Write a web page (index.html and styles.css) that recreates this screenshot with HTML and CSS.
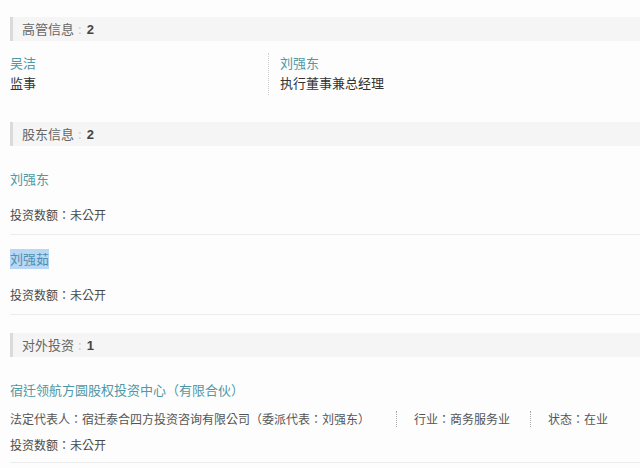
FILE: index.html
```html
<!DOCTYPE html>
<html lang="zh-CN">
<head>
    <meta charset="UTF-8">
    <meta name="viewport" content="width=device-width, initial-scale=1.0">
    <title>企业信息</title>
    <link rel="stylesheet" href="styles.css">
</head>
<body>
    <div class="page">
        <div class="section-title">高管信息<span class="sep">:</span><span class="count">2</span></div>
        <div class="exec-list">
            <div class="exec">
                <a class="link" href="#">吴洁</a>
                <div class="role">监事</div>
            </div>
            <div class="exec">
                <a class="link" href="#">刘强东</a>
                <div class="role">执行董事兼总经理</div>
            </div>
        </div>

        <div class="section-title second">股东信息<span class="sep">:</span><span class="count">2</span></div>
        <div class="holder-list">
            <div class="holder">
                <a class="link" href="#">刘强东</a>
                <div class="detail">投资数额：未公开</div>
            </div>
            <div class="holder">
                <a class="link selected" href="#">刘强茹</a>
                <div class="detail">投资数额：未公开</div>
            </div>
        </div>

        <div class="section-title third">对外投资<span class="sep">:</span><span class="count">1</span></div>
        <div class="invest">
            <a class="link company" href="#">宿迁领航方圆股权投资中心（有限合伙）</a>
            <div class="meta">
                <span>法定代表人：宿迁泰合四方投资咨询有限公司（委派代表：刘强东）</span>
                <span class="meta-item">行业：商务服务业</span>
                <span class="meta-item">状态：在业</span>
            </div>
            <div class="detail">投资数额：未公开</div>
        </div>
    </div>
</body>
</html>
```

FILE: styles.css
```css
body {
    margin: 0;
    background: #fdfdfd;
    font-family: "Noto Sans CJK TC", "Liberation Sans", sans-serif;
    font-feature-settings: "locl" 0;
    color: #333;
}
.page {
    padding: 17px 0 0 10px;
}
.section-title {
    height: 24px;
    line-height: 24px;
    background: #f5f5f5;
    border-left: 3px solid #dadada;
    padding-left: 9px;
    font-size: 13px;
    color: #666;
}
.section-title.second {
    margin-top: 27px;
}
.section-title.third {
    margin-top: 18px;
}
.sep {
    color: #d0d0d0;
    margin: 0 5px 0 4px;
}
.count {
    font-family: "Liberation Sans", sans-serif;
    font-weight: bold;
    color: #444;
}
.link {
    display: block;
    font-size: 13px;
    line-height: 20px;
    color: #4f98a6;
    text-decoration: none;
}
.link.selected {
    width: fit-content;
    background: #b8d7f5;
    color: #4f8fb0;
}
.exec-list {
    display: flex;
    margin-top: 12px;
}
.exec {
    width: 258px;
    font-size: 13px;
    line-height: 20px;
    padding-bottom: 2px;
}
.exec + .exec {
    border-left: 1px dotted #cfcfcf;
    padding-left: 11px;
}
.role {
    color: #333;
}
.holder-list {
    margin-top: 9px;
}
.holder {
    padding: 14px 0 9px;
    border-bottom: 1px solid #ececec;
}
.holder .detail {
    margin-top: 16px;
}
.detail {
    font-size: 12px;
    line-height: 20px;
    color: #4a4a4a;
}
.invest {
    padding: 23px 0 7px;
    border-bottom: 1px solid #ececec;
}
.company {
    font-size: 13px;
}
.meta {
    display: flex;
    margin-top: 9px;
    font-size: 12px;
    line-height: 20px;
    color: #555;
}
.meta-item {
    border-left: 1px dotted #aaa;
    margin-left: 26px;
    padding-left: 17px;
    height: 16px;
    line-height: 16px;
    margin-top: 2px;
}
.meta-item + .meta-item {
    margin-left: 20px;
}
.invest .detail {
    margin-top: 6px;
}
```
